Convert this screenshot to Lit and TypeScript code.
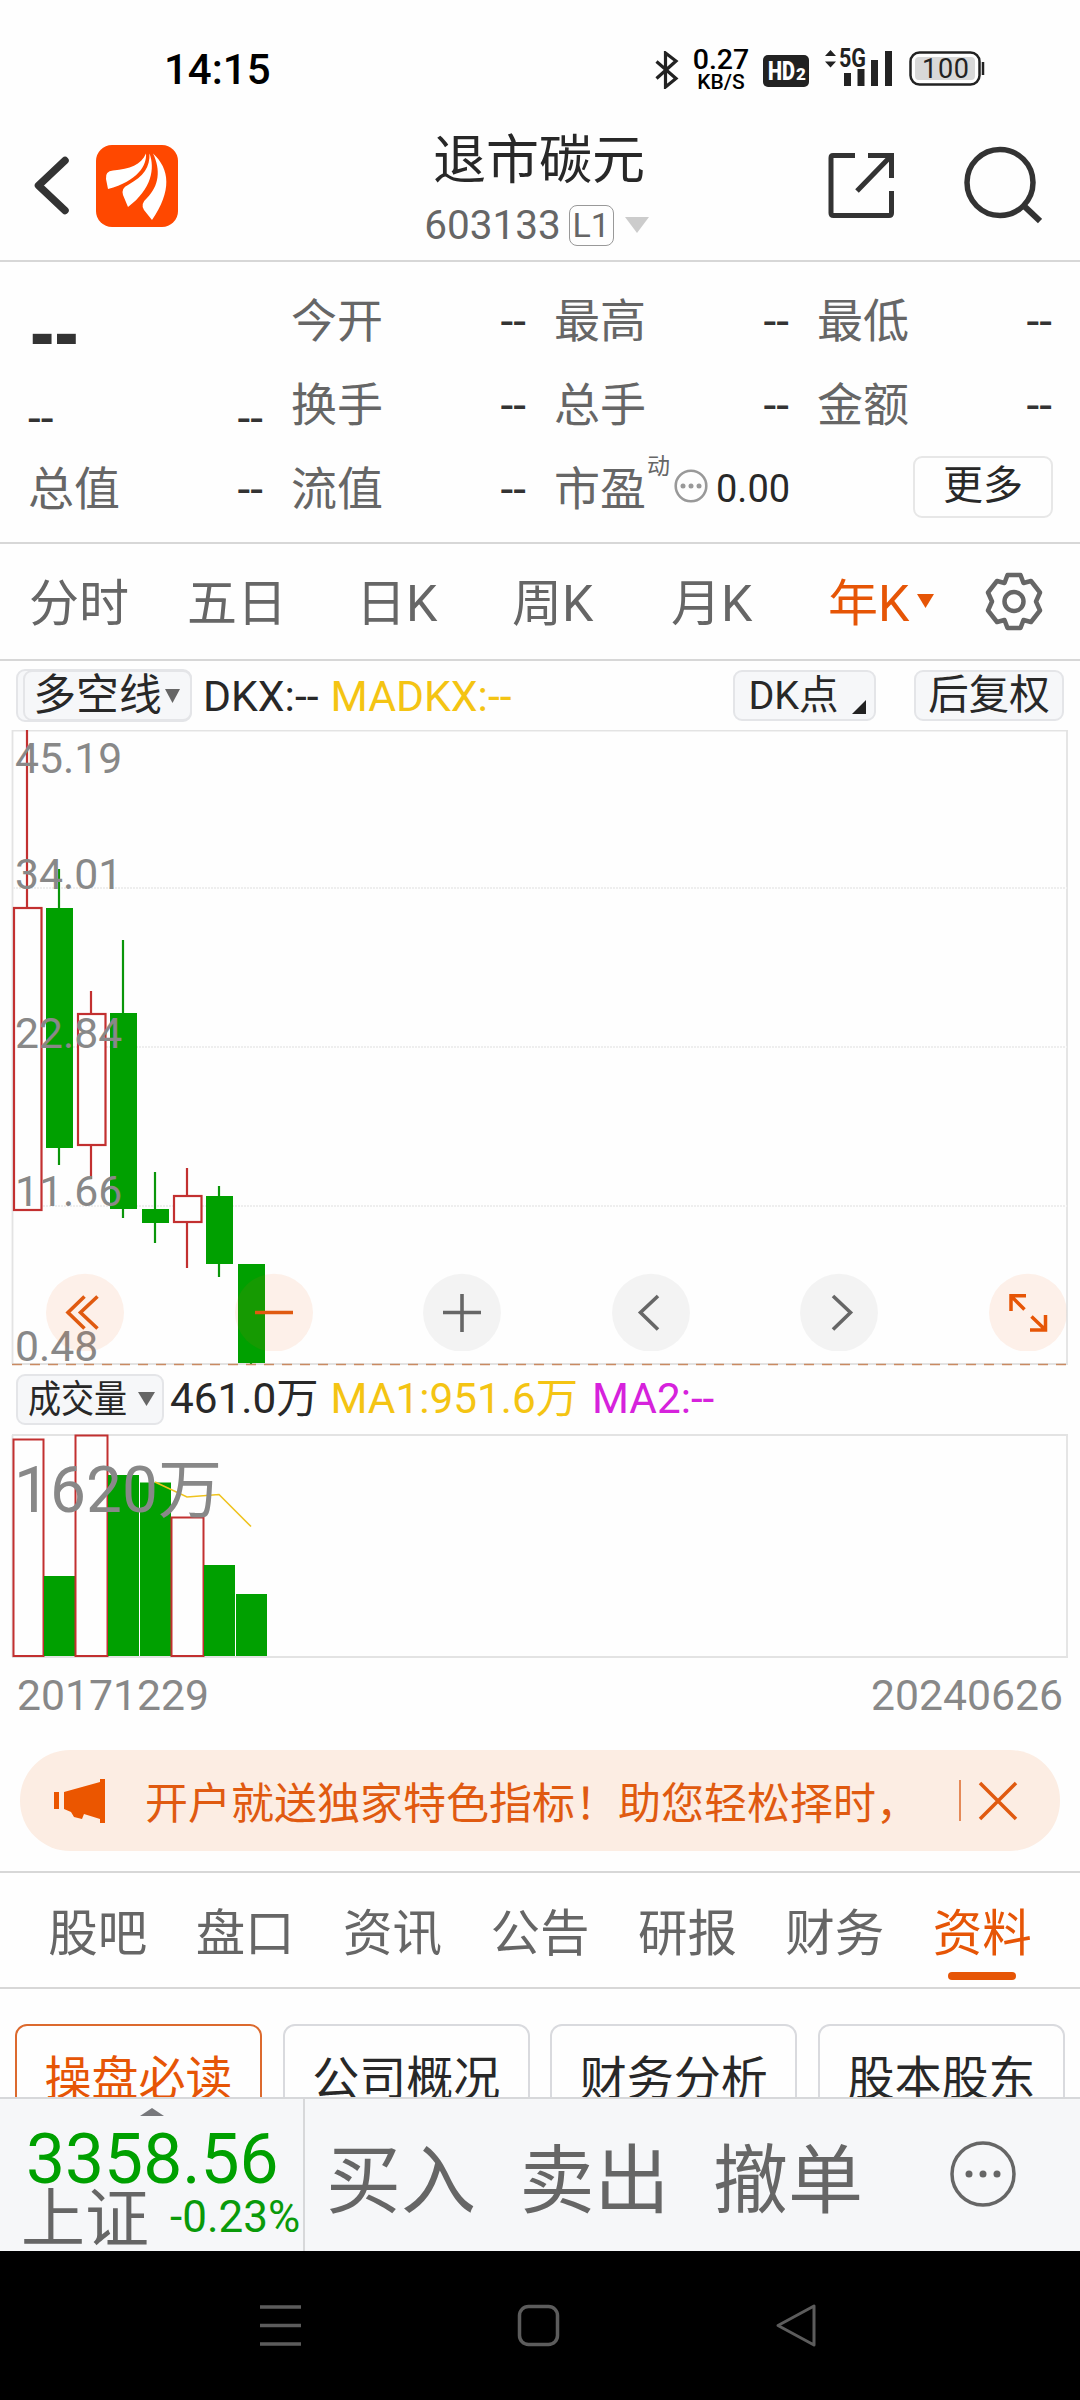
import { LitElement, html, svg, css } from "lit";
import { customElement } from "lit/decorators.js";

interface Candle {
  x: number;
  top: number;
  bottom: number;
  high: number;
  low: number;
  up: boolean;
}

const CANDLES: Candle[] = [
  { x: 27, top: 177, bottom: 481, high: 0, low: 481, up: true },
  { x: 59.5, top: 178, bottom: 418, high: 139, low: 435, up: false },
  { x: 91, top: 283, bottom: 416, high: 261, low: 449, up: true },
  { x: 123.5, top: 283, bottom: 479, high: 210, low: 488, up: false },
  { x: 155.5, top: 479, bottom: 493, high: 442, low: 513, up: false },
  { x: 187, top: 465, bottom: 493, high: 438, low: 538, up: true },
  { x: 219.5, top: 466, bottom: 534, high: 456, low: 547, up: false },
  { x: 251.5, top: 534, bottom: 633, high: 534, low: 635, up: false },
];

const PRICE_LABELS = [
  { text: "45.19", y: 43 },
  { text: "34.01", y: 159 },
  { text: "22.84", y: 318 },
  { text: "11.66", y: 476 },
  { text: "0.48", y: 631 },
];

const VOLUMES = [
  { x: 13, w: 31, top: 5, up: true },
  { x: 44, w: 31, top: 142, up: false },
  { x: 75, w: 33, top: 1, up: true },
  { x: 108, w: 31, top: 41, up: false },
  { x: 140, w: 31, top: 48.5, up: false },
  { x: 171, w: 33, top: 83, up: true },
  { x: 204, w: 31, top: 131, up: false },
  { x: 236, w: 31, top: 160, up: false },
];

const CONTROLS = [
  { cx: 85, hot: true, d: "M84.5 566.5L68 582.5L84.5 598.5M97.5 566.5L80.5 582.5L97.5 598.5" },
  { cx: 274, hot: true, d: "M255 582.5H293" },
  { cx: 462, hot: false, d: "M443 582.5H481M462 564V602" },
  { cx: 651, hot: false, d: "M658 566L640.5 582.5L658 599.5" },
  { cx: 839, hot: false, d: "M833 566L850.5 582.5L833 599.5" },
];

@customElement("app-root")
export class AppRoot extends LitElement {
  static styles = css`
    :host {
      display: block;
      width: 1080px;
      height: 2400px;
      overflow: hidden;
      background: #fefefe;
      color: #282828;
      font-family: Roboto, "Noto Sans CJK SC", sans-serif;
      white-space: nowrap;
    }
    * { box-sizing: border-box; }
    svg { display: block; flex: none; }
    .page { display: flex; flex-direction: column; height: 2400px; }

    .status { display: flex; height: 96px; padding-left: 164px; color: #000; }
    .clock { width: 491px; font-size: 42px; font-weight: 500; line-height: 50px; padding-top: 45px; }
    .bt { margin-top: 51px; }
    .speed { width: 60px; margin-left: 12px; padding-top: 46px; display: flex; flex-direction: column; font-weight: 500; align-items: center; }
    .rate { font-size: 28.5px; line-height: 27px; }
    .unit { font-size: 21px; line-height: 18px; }
    .icons { margin-left: 11px; }

    .header { display: flex; height: 166px; border-bottom: 2px solid #d7d7d7; }
    .back { margin: 59px 0 0 33px; }
    .logo { margin: 49px 0 0 24px; }
    .title { flex: 1; display: flex; flex-direction: column; align-items: center; padding-left: 67px; }
    .name { font-size: 53px; line-height: 60px; margin-top: 35px; padding-left: 5px; }
    .code { display: flex; align-items: center; height: 42px; margin-top: 13px; color: #666; font-size: 40.5px; }
    .level { width: 45px; height: 41px; line-height: 39px; border: 1.5px solid #999; border-radius: 8px; margin: 0 11px 0 8px; font-size: 34px; text-align: center; }
    .share { margin: 55px 0 0; }
    .search { margin: 49px 38px 0 66px; }

    .quote { height: 282px; padding: 17px 27px 0 28px; border-bottom: 2px solid #d7d7d7; display: grid; grid-template-columns: 235px 235px 235px 235px; column-gap: 28px; grid-template-rows: 84px 84px 84px; font-size: 46px; }
    .cell { display: flex; justify-content: space-between; align-items: center; line-height: 84px; }
    .lab { color: #666; }
    .val { color: #333; }
    .big { font-size: 64px; font-weight: 900; padding-top: 33px; letter-spacing: -4.5px; }
    .wide { transform: scaleY(1.25); }
    .low { padding-top: 27px; }
    .pe { display: flex; align-items: center; line-height: 84px; }
    .sup { font-size: 23px; line-height: 24px; color: #666; align-self: flex-start; margin: 8px 4px 0 1px; }
    .info { margin-top: -5px; }
    .pv { font-size: 38px; color: #282828; margin-left: 8px; }
    .more { justify-self: end; align-self: center; width: 140px; height: 62px; border: 2px solid #e7e7e7; border-radius: 9px; font-size: 40px; line-height: 56px; text-align: center; margin: -4px -1px 0 0; }

    .periods { display: grid; grid-template-columns: 158px 169px 156px 159px 157px 154px 1fr; height: 117px; padding-left: 29px; border-bottom: 2px solid #d7d7d7; font-size: 50px; line-height: 120px; color: #666; }
    .on { color: #e65506; }
    .period { display: flex; align-items: center; }
    .caret { margin: -5px 0 0 8px; }

    .indicators { display: flex; align-items: center; height: 70px; padding: 0 16px; font-size: 42.7px; }
    .chip { background: #f6f7f9; border: 2px solid #e4e5e8; border-radius: 9px; height: 51px; line-height: 45px; display: flex; align-items: center; justify-content: center; }
    .outer { height: 53px; width: 176px; padding-left: 5px; }
    .inner { width: 169px; margin-right: -2px; font-size: 42.8px; gap: 3px; padding-right: 2px; }
    .dkx { margin-left: 11px; }
    .yellow { color: #f4c413; margin-left: 12px; }
    .purple { color: #d622dc; margin-left: 14px; }
    .dk { margin-left: auto; width: 143px; font-size: 39.5px; padding-left: 5px; gap: 13px; }
    .fq { margin-left: 38px; width: 150px; font-size: 40.5px; }
    .corner { align-self: flex-end; margin-bottom: 5px; }
    .volrow { display: flex; align-items: center; height: 66px; padding: 0 16px; margin-bottom: 2px; font-size: 42.3px; line-height: 50px; }
    .vchip { width: 148px; font-size: 38px; padding-left: 2px; }
    .squeeze { transform: scaleX(0.87); transform-origin: left; width: 110px; }
    .vnum { margin-left: 6px; }
    .dates { display: flex; justify-content: space-between; height: 91px; padding: 11px 17px 0 17px; font-size: 42.7px; line-height: 50px; color: #888; }

    .banner { display: flex; align-items: center; height: 101px; margin: 0 20px 20px; border-radius: 50px; background: #fcede3; color: #e05a10; font-size: 43px; padding-left: 34px; }
    .msg { width: 815px; margin-left: 39px; padding-bottom: 1px; }
    .sep { width: 2px; height: 41px; background: #e58a58; margin: 0 17px 0 -1px; }
    .tabs { display: grid; grid-template-columns: repeat(7, 1fr); height: 118px; padding: 0 24px; border-top: 2px solid #d7d7d7; border-bottom: 2px solid #d7d7d7; font-size: 49.5px; color: #666; text-align: center; }
    .tab { line-height: 100px; padding-top: 11px; display: flex; flex-direction: column; align-items: center; }
    .bar { width: 68px; height: 8px; border-radius: 4px; background: #e65506; margin-top: -12.5px; }
    .cards { display: grid; grid-template-columns: repeat(4, 247px); justify-content: space-between; height: 108px; padding: 35px 15px 0; overflow: hidden; font-size: 47px; }
    .card { height: 110px; border: 2px solid #d9dade; border-radius: 12px; text-align: center; line-height: 106px; }
    .card.on { border-color: #dc6a2e; }

    .bottom { display: flex; height: 154px; background: #f6f7f9; border-top: 2px solid #d7d8da; color: #666; }
    .index { width: 305px; border-right: 2px solid #d7d8da; display: flex; flex-direction: column; padding-left: 21px; }
    .up { margin: 9px 0 0 119px; }
    .pts { color: #00a000; font-size: 69.5px; line-height: 70px; margin: 9px 0 0 5px; height: 64px; }
    .chg { display: flex; height: 68px; }
    .sz { font-size: 64px; line-height: 68px; width: 149px; margin-top: -3px; }
    .pct { color: #0a9a0a; font-size: 44px; line-height: 68px; margin-top: -6px; }
    .act { font-size: 75px; line-height: 164px; width: 150px; height: 150px; margin-left: 43.5px; }
    .act.first { margin-left: 21px; }
    .dots { margin: 40px 0 0 85px; }
    .nav { height: 149px; background: #000; }
  `;

  private statusIcons() {
    return html`<svg class="icons" width="225" height="96" viewBox="762 0 225 96">
      <rect x="763" y="55" width="46" height="32" rx="5" fill="#222" />
      <text x="768" y="80" font-size="25" font-weight="900" fill="#fff" textLength="27" lengthAdjust="spacingAndGlyphs">HD</text>
      <text x="796" y="80" font-size="17" font-weight="900" fill="#fff">2</text>
      <path d="M825 56L830.5 50L836 56ZM825 61.5H836L830.5 67.5Z" fill="#222" />
      <text x="839" y="67" font-size="25" font-weight="700" fill="#222" textLength="27" lengthAdjust="spacingAndGlyphs">5G</text>
      <path d="M844 73h7v13h-7zM857.5 69h7v17h-7zM871 60h7v26h-7zM885 51h7v35h-7z" fill="#222" />
      <rect x="910.5" y="52.5" width="69" height="32" rx="9" fill="none" stroke="#222" stroke-width="2.5" />
      <rect x="915" y="57" width="60" height="23" rx="4" fill="#d8d8d8" />
      <path d="M983 62v13" stroke="#222" stroke-width="2.5" />
      <text x="922" y="78" font-size="27" fill="#222" textLength="47">100</text>
    </svg>`;
  }

  private priceChart() {
    return html`<svg width="1080" height="636" viewBox="0 0 1080 636">
      <path d="M12.5 0V634M1067 0V634" stroke="#e3e3e3" stroke-width="1.8" />
      <path d="M12 0.5H1068M12 634H1068" stroke="#e3e3e3" stroke-width="2" />
      <path d="M13 158H1067M13 317H1067M13 476H1067" stroke="#eee" stroke-width="2" stroke-dasharray="2 1" />
      ${CANDLES.map((c) =>
        c.up
          ? svg`<path d="M${c.x} ${c.high}V${c.top}M${c.x} ${c.bottom}V${c.low}" stroke="#c23030" stroke-width="2.2"/>
              <rect x=${c.x - 13} y=${c.top + 1} width="27.5" height=${c.bottom - c.top - 2} fill="#fefefe" stroke="#c23030" stroke-width="2.2"/>`
          : svg`<path d="M${c.x - 0.5} ${c.high}V${c.low}" stroke="#0a960a" stroke-width="2.2"/>
              <rect x=${c.x - 13.5} y=${c.top} width="27" height=${c.bottom - c.top} fill="#00a000"/>`
      )}
      ${PRICE_LABELS.map((l) => svg`<text x="15" y=${l.y} font-size="42.7" fill="#888">${l.text}</text>`)}
      <path d="M12 634.5H1067" stroke="#c98a62" stroke-width="1.3" stroke-dasharray="10 8" />
      <defs><clipPath id="cut"><rect x="0" y="543" width="1066.5" height="78" /></clipPath></defs>
      <g clip-path="url(#cut)">
        ${CONTROLS.map((b) => svg`<circle cx=${b.cx} cy="582.7" r="39" fill=${b.hot ? "rgba(240,95,20,.09)" : "rgba(0,0,0,.045)"}/>`)}
        <circle cx="1028" cy="582.7" r="39" fill="rgba(240,95,20,.09)" />
      </g>
      ${CONTROLS.map((b) => svg`<path d=${b.d} fill="none" stroke=${b.hot ? "#e05a10" : "#666"} stroke-width="3.6"/>`)}
      <path d="M1026 565.7H1011V581M1011.5 566.5L1024.5 579.5M1045.5 585V600H1030M1045 599.5L1031.5 586.5" fill="none" stroke="#e65506" stroke-width="3.5" />
    </svg>`;
  }

  private volumeChart() {
    return html`<svg width="1080" height="225" viewBox="0 0 1080 225">
      <path d="M12.5 1V223M1067 1V223" stroke="#e3e3e3" stroke-width="1.8" />
      <path d="M12 1H1068M12 223H1068" stroke="#e3e3e3" stroke-width="2" />
      ${VOLUMES.map((v) =>
        v.up
          ? svg`<rect x=${v.x + 0.5} y=${v.top + 0.5} width=${v.w - 1} height=${221.5 - v.top} fill="#fefefe" stroke="#c23030" stroke-width="2"/>`
          : svg`<rect x=${v.x} y=${v.top} width=${v.w} height=${222 - v.top} fill="#00a000"/>`
      )}
      <path d="M155 48L187 63L219 60.5L251 92.5" fill="none" stroke="#efc31e" stroke-width="1.6" />
      <text x="14" y="77.5" font-size="64" fill="#888">1620万</text>
    </svg>`;
  }

  render() {
    const down = (w: number, h: number, fill: string) =>
      html`<svg width=${w} height=${h} viewBox="0 0 10 10" preserveAspectRatio="none"><path d="M0 0H10L5 10Z" fill=${fill} /></svg>`;
    const cell = (lab: string) => html`<div class="cell"><span class="lab">${lab}</span><span class="val">--</span></div>`;
    return html`<div class="page">
      <div class="status">
        <div class="clock">14:15</div>
        <svg class="bt" width="24" height="38" viewBox="0 0 24 38"><path d="M1.5 10.5L21 27.5L10.5 36V2L21 10L1.5 27.5" fill="none" stroke="#222" stroke-width="3.2" /></svg>
        <div class="speed"><span class="rate">0.27</span><span class="unit">KB/S</span></div>
        ${this.statusIcons()}
      </div>

      <div class="header">
        <svg class="back" width="39" height="64" viewBox="0 0 39 64"><path d="M32 5.5L5.5 30.5L32 55.5" fill="none" stroke="#333" stroke-width="7.5" stroke-linecap="round" stroke-linejoin="round" /></svg>
        <svg class="logo" width="82" height="82" viewBox="0 0 82 82">
          <rect width="82" height="82" rx="16" fill="#ff4800" />
          <path d="M50 8.5C51 20 42 36 12 44L10 34Q9 26 17 25.5C34 24 45 20 50 8.5Z" fill="#fff" />
          <path d="M53.5 8.5C59 23 56 44 32 62L27 50Q25 43 32 40C48 31 54 22 53.5 8.5Z" fill="#fff" />
          <path d="M57 8.5C74 24 76 46 56 75L48 65Q44 59 51 53C63 41 65 25 57 8.5Z" fill="#fff" />
        </svg>
        <div class="title">
          <div class="name">退市碳元</div>
          <div class="code">603133<span class="level">L1</span>${down(24, 16, "#ccc")}</div>
        </div>
        <svg class="share" width="68" height="68" viewBox="0 0 68 68"><path d="M27 4.5H5Q3 4.5 3 7V62Q3 64.5 5.5 64.5H61Q63.5 64.5 63.5 62V40M40 4.5H63.5V27M63 5L29 40" fill="none" stroke="#333" stroke-width="5" /></svg>
        <svg class="search" width="80" height="80" viewBox="0 0 80 80"><circle cx="38" cy="37.5" r="33" fill="none" stroke="#333" stroke-width="5.5" /><path d="M61 60L78 76" stroke="#333" stroke-width="6" /></svg>
      </div>

      <div class="quote">
        <div class="cell val big"><span class="wide">--</span></div>
        ${cell("今开")}${cell("最高")}${cell("最低")}
        <div class="cell val low"><span>--</span><span>--</span></div>
        ${cell("换手")}${cell("总手")}${cell("金额")}
        ${cell("总值")}${cell("流值")}
        <div class="pe"><span class="lab">市盈</span><span class="sup">动</span>
          <svg class="info" width="34" height="34" viewBox="0 0 34 34"><circle cx="17" cy="17" r="15.3" fill="none" stroke="#999" stroke-width="2.6" /><g fill="#999"><circle cx="9" cy="17" r="2.5" /><circle cx="17" cy="17" r="2.5" /><circle cx="25" cy="17" r="2.5" /></g></svg>
          <span class="pv">0.00</span></div>
        <div class="more">更多</div>
      </div>

      <div class="periods">
        <span>分时</span><span>五日</span><span>日K</span><span>周K</span><span>月K</span>
        <span class="period on">年K<span class="caret">${down(17, 14, "#e65506")}</span></span>
        <svg width="64" height="115" viewBox="0 0 64 115"><g transform="translate(32 57.5)" fill="none" stroke="#666" stroke-width="4.5" stroke-linejoin="round"><path d="M-6.5 -26.5H6.5L9.5 -18.5L17 -20.5L26 -9L22 0L26 9L17 20.5L9.5 18.5L6.5 26.5H-6.5L-9.5 18.5L-17 20.5L-26 9L-22 0L-26 -9L-17 -20.5L-9.5 -18.5Z" /><circle r="9.5" /></g></svg>
      </div>

      <div class="indicators">
        <div class="chip outer"><div class="chip inner">多空线${down(15, 14, "#666")}</div></div>
        <span class="dkx">DKX:--</span><span class="yellow">MADKX:--</span>
        <div class="chip dk">DK点<svg class="corner" width="14" height="14" viewBox="0 0 14 14"><path d="M14 0V14H0Z" fill="#222" /></svg></div>
        <div class="chip fq">后复权</div>
      </div>
      ${this.priceChart()}
      <div class="volrow">
        <div class="chip vchip"><span class="squeeze">成交量</span>${down(17, 14, "#666")}</div>
        <span class="vnum">461.0万</span><span class="yellow">MA1:951.6万</span><span class="purple">MA2:--</span>
      </div>
      ${this.volumeChart()}
      <div class="dates"><span>20171229</span><span>20240626</span></div>

      <div class="banner">
        <svg width="52" height="46" viewBox="0 0 52 46"><path d="M0 14H5V31H0ZM10 14L46 4V1H51V45H46V41L30 36L28 41L20 39L17 34L10 31Z" fill="#eb5600" /></svg>
        <span class="msg">开户就送独家特色指标！助您轻松择时，</span>
        <span class="sep"></span>
        <svg width="40" height="40" viewBox="0 0 40 40"><path d="M2 2L38 38M38 2L2 38" stroke="#e05a10" stroke-width="3.5" /></svg>
      </div>

      <div class="tabs">
        ${["股吧", "盘口", "资讯", "公告", "研报", "财务"].map((t) => html`<span class="tab">${t}</span>`)}
        <span class="tab on">资料<span class="bar"></span></span>
      </div>
      <div class="cards">
        <div class="card on">操盘必读</div><div class="card">公司概况</div><div class="card">财务分析</div><div class="card">股本股东</div>
      </div>

      <div class="bottom">
        <div class="index">
          <svg class="up" width="24" height="8" viewBox="0 0 24 8"><path d="M0 8L12 0L24 8Z" fill="#77787c" /></svg>
          <div class="pts">3358.56</div>
          <div class="chg"><span class="sz">上证</span><span class="pct">-0.23%</span></div>
        </div>
        <span class="act first">买入</span><span class="act">卖出</span><span class="act">撤单</span>
        <svg class="dots" width="70" height="70" viewBox="0 0 70 70"><circle cx="35" cy="35" r="31" fill="none" stroke="#666" stroke-width="3.5" /><g fill="#666"><circle cx="21" cy="35" r="3.5" /><circle cx="35" cy="35" r="3.5" /><circle cx="49" cy="35" r="3.5" /></g></svg>
      </div>
      <svg class="nav" width="1080" height="149" viewBox="0 2251 1080 149"><rect y="2251" width="1080" height="149" /><g fill="none" stroke="#5c5c5c" stroke-width="3.5"><path d="M260 2307H301M260 2325.5H301M260 2344H301" /><rect x="519.5" y="2306.5" width="38" height="38" rx="9" /><path d="M778 2325.5L814 2306V2345Z" stroke-linejoin="round" stroke-width="3" /></g></svg>
    </div>`;
  }
}
